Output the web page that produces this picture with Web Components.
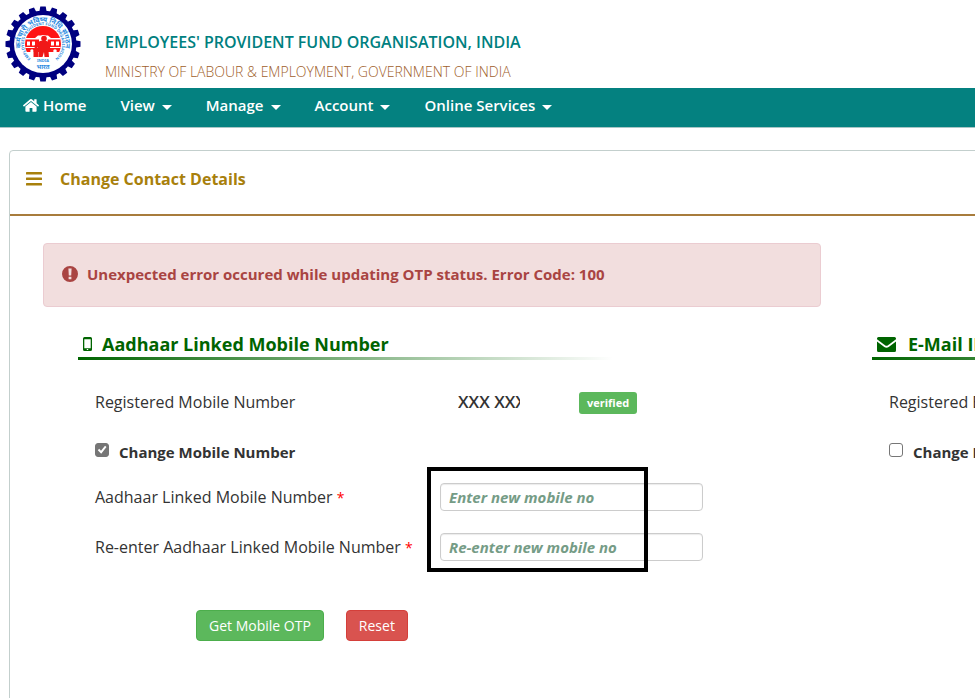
<!DOCTYPE html>
<html lang="en">
<head>
<meta charset="utf-8">
<title>Change Contact Details</title>
<style>
  html {
    overflow-x: hidden;
  }
  body {
    margin: 0;
    background: #fff;
    color: #333;
    font: 16px/24px "Open Sans", "Noto Sans", sans-serif;
    overflow-x: hidden;
  }
</style>
</head>
<body>
<epf-app></epf-app>

<script>
const ICONS = {
  home: '<svg viewBox="0 0 16 14"><path d="M8 4 2.400 8.600v4.400q0 .8.8.8h3.400V10h2.800v3.800h3.400q.8 0 .8-.8V8.600z"/><path d="M8 2.900 1.200 8.500q-.3.2-.5 0L.1 7.700q-.2-.3 0-.5L7.200 1.300q.8-.6 1.600 0L11.200 3.300V1.500q0-.3.3-.3h1.800q.3 0 .3.300v3.800l2.300 1.900q.2.200 0 .5l-.6.800q-.2.200-.5 0z"/></svg>',
  bars: '<svg viewBox="0 0 16 14"><rect y="0" width="16" height="2.600" rx=".6"/><rect y="5.500" width="16" height="2.600" rx=".6"/><rect y="11" width="16" height="2.600" rx=".6"/></svg>',
  alert: '<svg viewBox="0 0 16 16"><path fill-rule="evenodd" d="M8 0a8 8 0 1 1 0 16A8 8 0 0 1 8 0zM6.400 2.600l.4 6.800h2.400L9.600 2.600zM6.600 10.700v2.600h2.800v-2.600z"/></svg>',
  mobile: '<svg viewBox="0 0 9 14"><path fill-rule="evenodd" d="M1.500 0h6Q9 0 9 1.500v11Q9 14 7.500 14h-6Q0 14 0 12.500v-11Q0 0 1.500 0zM1.300 2.200v9h6.400v-9zM3.800 12.100v1h1.400v-1z"/></svg>',
  mail: '<svg viewBox="0 0 19 15"><path d="M0 1.500Q0 0 1.500 0h16Q19 0 19 1.500v.8L11 8.300Q9.500 9.400 8 8.300L0 2.300z"/><path d="M0 4.500 7.300 10q2.200 1.500 4.400 0L19 4.500v9q0 1.500-1.500 1.500h-16Q0 15 0 13.500z"/></svg>'
};

class EpfIcon extends HTMLElement {
  constructor() {
    super();
    this.attachShadow({ mode: 'open' });
  }

  connectedCallback() {
    this.shadowRoot.innerHTML = `
      <style>
        :host { display: inline-block; flex: none; }
        svg { display: block; width: 100%; height: 100%; fill: currentColor; }
      </style>
      ${ICONS[this.getAttribute('name')]}
    `;
  }
}
customElements.define('epf-icon', EpfIcon);

class EpfLogo extends HTMLElement {
  constructor() {
    super();
    this.attachShadow({ mode: 'open' });
  }

  connectedCallback() {
    // cog outline, one tooth per step
    const teeth = 20;
    let cog = '';
    for (let i = 0; i < teeth; i++) {
      cog += `<path d="M-3.700 -32 -2.700 -37.500H2.700L3.700 -32z" transform="rotate(${i * 360 / teeth})"/>`;
    }
    this.shadowRoot.innerHTML = `
      <style>
        :host { display: block; width: 76px; height: 76px; flex: none; }
        svg { display: block; }
        text { fill: #2a8ae0; font-family: "Noto Sans", "Open Sans", sans-serif; font-weight: 700; }
      </style>
      <svg viewBox="-38 -38 76 76" role="img" aria-label="EPFO">
        <defs>
          <path id="outer" d="M-19.500 11.500A22.500 22.500 0 1 1 19.500 11.500"/>
          <path id="inner" d="M-11 15.500A19 19 0 1 1 11 15.500"/>
          <clipPath id="disc"><circle r="18"/></clipPath>
        </defs>
        <g fill="#000080">${cog}<circle r="33.500"/></g>
        <circle r="29" fill="#fff"/>
        <text font-size="7"><textPath href="#outer" startOffset="50%" text-anchor="middle">कर्मचारी भविष्य निधि संगठन</textPath></text>
        <text font-size="4"><textPath href="#inner" startOffset="50%" text-anchor="middle">EMPLOYEES PROVIDENT FUND ORGANISATION</textPath></text>
        <g clip-path="url(#disc)">
          <path fill="#ff1414" d="M-18-18H18V8H-18z"/>
          <g fill="#fff">
            <path d="M-18-6H-8L-5-8.500H5L8-6H18V-4.500H-18z"/>
            <rect x="-16" y="-2.500" width="3" height="4"/><rect x="-11" y="-2.500" width="3" height="4"/>
            <rect x="8" y="-2.500" width="3" height="4"/><rect x="13" y="-2.500" width="3" height="4"/>
            <path d="M-18 3H18V4H-18z"/>
            <circle cx="-11" cy="7" r="1.800"/><circle cx="12" cy="7" r="1.800"/>
            <path d="M-4-6Q0-12 5-6L4 3H-4z"/>
          </g>
          <g fill="#f01818">
            <circle cx="1" cy="-5.500" r="2.800"/>
            <path d="M-4-2.500Q1-4.500 5.500-2L8 7H5.500L6 13H1.500L1 8-.5 13H-4.500L-4 7-8 10-9 8-5 3z"/>
            <circle cx="-7" cy="2.500" r="1.800"/><path d="M-9.500 5h5v8h-5z"/>
          </g>
        </g>
        <text font-size="4" y="18" text-anchor="middle">INDIA</text>
        <text font-size="6" y="25" text-anchor="middle">भारत</text>
      </svg>
    `;
  }
}
customElements.define('epf-logo', EpfLogo);

class EpfHeader extends HTMLElement {
  constructor() {
    super();
    this.attachShadow({ mode: 'open' });
  }

  connectedCallback() {
    this.shadowRoot.innerHTML = `
      <style>
        :host { display: flex; gap: 24px; padding: 6px 5px; }
        .titles { padding-top: 24px; }
        h1 { margin: 0; font-size: 16px; line-height: 24px; font-weight: 600; color: #008080; }
        p { margin: 9px 0 0; font-size: 14px; line-height: 18px; font-weight: 300; color: #a0602a; }
      </style>
      <epf-logo></epf-logo>
      <div class="titles">
        <h1><slot name="title"></slot></h1>
        <p><slot name="subtitle"></slot></p>
      </div>
    `;
  }
}
customElements.define('epf-header', EpfHeader);

class EpfNav extends HTMLElement {
  constructor() {
    super();
    this.attachShadow({ mode: 'open' });
    this.menus = ['View', 'Manage', 'Account', 'Online Services'];
  }

  connectedCallback() {
    this.shadowRoot.innerHTML = `
      <style>
        :host { display: block; background: #048180; border-bottom: 1px solid #a9c6c6; }
        nav { display: flex; padding: 0 6px 5px; }
        a, button {
          display: flex; align-items: center; height: 34px; padding: 0 17px;
          border: 0; background: none; color: #fff; text-decoration: none;
          font: 600 15px/24px "Open Sans", "Noto Sans", sans-serif; cursor: pointer;
        }
        a { gap: 4px; }
        button { gap: 7px; }
        epf-icon { width: 16px; height: 14px; }
        .caret { margin-top: 4px; border: 5px solid transparent; border-top-color: #fff; border-bottom: 0; }
      </style>
      <nav>
        <a href="#"><epf-icon name="home"></epf-icon>Home</a>
        ${this.menus.map(m => `<button type="button" aria-haspopup="true">${m}<span class="caret"></span></button>`).join('')}
      </nav>
    `;
  }
}
customElements.define('epf-nav', EpfNav);

class EpfPanel extends HTMLElement {
  constructor() {
    super();
    this.attachShadow({ mode: 'open' });
  }

  connectedCallback() {
    this.shadowRoot.innerHTML = `
      <style>
        :host { display: block; border: 1px solid #c3cfcd; border-radius: 4px; background: #fff; }
        header {
          display: flex; align-items: center; gap: 18px; padding: 16px 16px 23px;
          border-bottom: 2px solid #a87c3c; color: #a8800c;
        }
        h2 { margin: 0; font-size: 16px; line-height: 24px; font-weight: 700; }
        epf-icon { width: 16px; height: 14px; }
        .body { padding: 27px 33px 80px; }
      </style>
      <header>
        <epf-icon name="bars"></epf-icon>
        <h2><slot name="heading"></slot></h2>
      </header>
      <div class="body"><slot></slot></div>
    `;
  }
}
customElements.define('epf-panel', EpfPanel);

class EpfAlert extends HTMLElement {
  constructor() {
    super();
    this.attachShadow({ mode: 'open' });
  }

  connectedCallback() {
    this.shadowRoot.innerHTML = `
      <style>
        :host {
          display: flex; align-items: center; gap: 9px; padding: 18px 18px 20px;
          border: 1px solid #ebccd1; border-radius: 4px;
          background: #f2dede; color: #a94442;
          font-size: 15px; line-height: 24px; font-weight: 700;
        }
        epf-icon { width: 16px; height: 16px; }
      </style>
      <epf-icon name="alert"></epf-icon>
      <span role="alert"><slot></slot></span>
    `;
  }
}
customElements.define('epf-alert', EpfAlert);

class EpfSection extends HTMLElement {
  constructor() {
    super();
    this.attachShadow({ mode: 'open' });
  }

  connectedCallback() {
    const icon = this.getAttribute('icon');
    this.shadowRoot.innerHTML = `
      <style>
        :host { display: block; padding-left: 35px; }
        h3 {
          display: flex; align-items: center; margin: 0; padding: 0 5px;
          color: #006400; font-size: 18px; line-height: 26px; font-weight: 700;
        }
        .mobile { width: 9px; height: 14px; margin-right: 10px; }
        .mail { width: 19px; height: 15px; margin-right: 12px; }
        .rule { height: 3px; background: linear-gradient(to right, #006400, transparent 72%); }
        .rows { padding: 28px 17px 0; }
      </style>
      <h3><epf-icon class="${icon}" name="${icon}"></epf-icon><slot name="heading"></slot></h3>
      <div class="rule"></div>
      <div class="rows"><slot></slot></div>
    `;
  }
}
customElements.define('epf-section', EpfSection);

// Read-only value with a status badge
class EpfValue extends HTMLElement {
  constructor() {
    super();
    this.attachShadow({ mode: 'open' });
  }

  connectedCallback() {
    this.shadowRoot.innerHTML = `
      <style>
        :host { display: flex; align-items: center; height: 28px; }
        .label { width: 345px; }
        .value { width: 62px; margin: 0 59px 0 18px; overflow: hidden; white-space: nowrap; font-size: 17px; font-weight: 600; }
        .badge {
          margin-top: 2px; padding: 0 8px; border-radius: 3px; background: #5cb85c; color: #fff;
          font-size: 11px; line-height: 22px; font-weight: 700;
        }
      </style>
      <span class="label">${this.getAttribute('label')}</span>
      <span class="value">${this.getAttribute('value')}</span>
      <span class="badge">verified</span>
    `;
  }
}
customElements.define('epf-value', EpfValue);

class EpfCheck extends HTMLElement {
  constructor() {
    super();
    this.attachShadow({ mode: 'open' });
  }

  connectedCallback() {
    this.shadowRoot.innerHTML = `
      <style>
        :host { display: flex; height: 28px; margin-top: 22px; }
        label { display: flex; align-items: center; gap: 10px; font-size: 15px; font-weight: 700; }
        input {
          appearance: none; width: 14px; height: 14px; margin: 0 0 4px; border: 1px solid #767676;
          border-radius: 3px; background: #fff; display: grid; place-content: center;
        }
        input:checked { background: #767676; }
        input:checked::before {
          content: ""; width: 10px; height: 10px; background: #fff;
          clip-path: polygon(8% 52%, 22% 38%, 40% 58%, 80% 8%, 95% 20%, 42% 88%);
        }
      </style>
      <label><input type="checkbox" ${this.hasAttribute('checked') ? 'checked' : ''}>${this.getAttribute('label')}</label>
    `;
  }
}
customElements.define('epf-check', EpfCheck);

class EpfField extends HTMLElement {
  constructor() {
    super();
    this.attachShadow({ mode: 'open' });
  }

  connectedCallback() {
    this.shadowRoot.innerHTML = `
      <style>
        :host { display: flex; align-items: center; }
        label { width: 345px; white-space: nowrap; }
        i { color: #f00; font-style: normal; font-size: 14px; }
        input {
          box-sizing: border-box; width: 263px; height: 28px; padding: 0 8px;
          border: 1px solid #ccc; border-radius: 4px; background: #fff; color: #333;
          box-shadow: inset 0 1px 1px rgba(0, 0, 0, .08);
          font: 15px/20px "Open Sans", "Noto Sans", sans-serif;
        }
        input::placeholder { color: #759c86; opacity: 1; font-style: italic; font-weight: 700; }
      </style>
      <label for="field">${this.getAttribute('label')} <i>*</i></label>
      <input id="field" type="text" placeholder="${this.getAttribute('placeholder')}">
    `;
  }
}
customElements.define('epf-field', EpfField);

// Stacks fields and frames the start of their inputs
class EpfFields extends HTMLElement {
  constructor() {
    super();
    this.attachShadow({ mode: 'open' });
  }

  connectedCallback() {
    this.shadowRoot.innerHTML = `
      <style>
        :host { display: flex; flex-direction: column; gap: 22px; margin-top: 17px; position: relative; }
        .frame {
          position: absolute; left: 332px; top: -16px; bottom: -11px; width: 221px;
          box-sizing: border-box; border: 4px solid #000; pointer-events: none;
        }
      </style>
      <slot></slot>
      <div class="frame"></div>
    `;
  }
}
customElements.define('epf-fields', EpfFields);

class EpfButton extends HTMLElement {
  constructor() {
    super();
    this.attachShadow({ mode: 'open' });
  }

  connectedCallback() {
    this.shadowRoot.innerHTML = `
      <style>
        :host { display: inline-block; }
        button {
          display: block; padding: 5px 12px 4px; border: 1px solid #4cae4c; border-radius: 4px;
          background: #5cb85c; color: #fff; cursor: pointer;
          font: 14px/20px "Open Sans", "Noto Sans", sans-serif;
        }
        :host([kind="danger"]) button { background: #d9534f; border-color: #d43f3a; }
      </style>
      <button type="button"><slot></slot></button>
    `;
  }
}
customElements.define('epf-button', EpfButton);

class EpfApp extends HTMLElement {
  constructor() {
    super();
    this.attachShadow({ mode: 'open' });
  }

  connectedCallback() {
    this.shadowRoot.innerHTML = `
      <style>
        /* desktop-only layout, narrower windows show its left part */
        :host { display: block; min-width: 1658px; }
        epf-panel { margin: 22px 9px; }
        .columns { display: grid; grid-template-columns: 1fr 1fr; column-gap: 16px; row-gap: 24px; }
        epf-alert { grid-column: 1; }
        epf-section { grid-row: 2; }
        .actions { display: flex; gap: 22px; padding: 49px 0 0 101px; }
      </style>
      <epf-header>
        <span slot="title">EMPLOYEES' PROVIDENT FUND ORGANISATION, INDIA</span>
        <span slot="subtitle">MINISTRY OF LABOUR &amp; EMPLOYMENT, GOVERNMENT OF INDIA</span>
      </epf-header>
      <epf-nav></epf-nav>
      <epf-panel>
        <span slot="heading">Change Contact Details</span>
        <div class="columns">
          <epf-alert>Unexpected error occured while updating OTP status. Error Code: 100</epf-alert>
          <epf-section icon="mobile">
            <span slot="heading">Aadhaar Linked Mobile Number</span>
            <epf-value label="Registered Mobile Number" value="XXX XXX"></epf-value>
            <epf-check label="Change Mobile Number" checked></epf-check>
            <epf-fields>
              <epf-field label="Aadhaar Linked Mobile Number" placeholder="Enter new mobile no"></epf-field>
              <epf-field label="Re-enter Aadhaar Linked Mobile Number" placeholder="Re-enter new mobile no"></epf-field>
            </epf-fields>
            <div class="actions">
              <epf-button>Get Mobile OTP</epf-button>
              <epf-button kind="danger">Reset</epf-button>
            </div>
          </epf-section>
          <epf-section icon="mail">
            <span slot="heading">E-Mail ID</span>
            <epf-value label="Registered E-Mail ID" value="XXX XXX"></epf-value>
            <epf-check label="Change E-Mail ID"></epf-check>
          </epf-section>
        </div>
      </epf-panel>
    `;
  }
}
customElements.define('epf-app', EpfApp);
</script>
</body>
</html>
